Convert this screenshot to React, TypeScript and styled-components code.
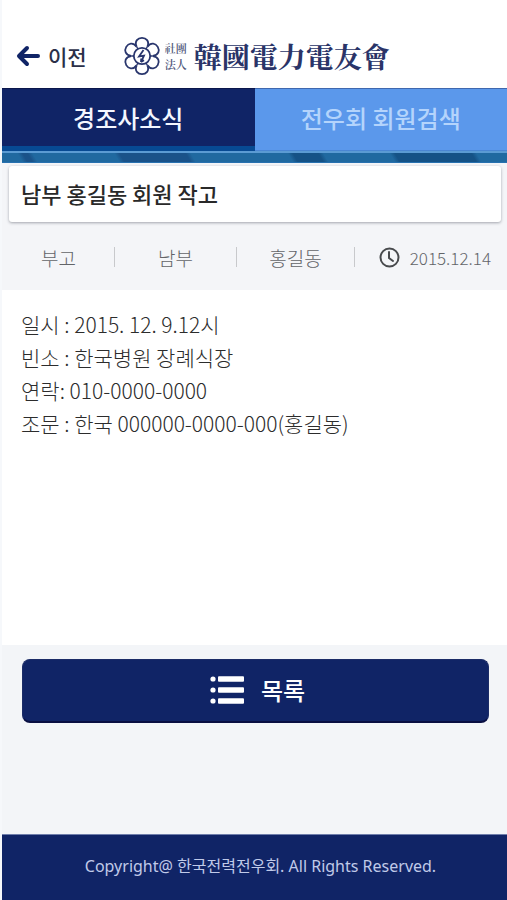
import React from 'react';
import styled, { createGlobalStyle } from 'styled-components';

const navy = '#102466';

const GlobalStyle = createGlobalStyle`
  * { box-sizing: border-box; }
  body {
    margin: 0;
    background: #fff;
    font-family: "Noto Sans CJK KR", "Noto Sans", sans-serif;
  }
`;

const Page = styled.div`
  min-height: 100vh;
  display: flex;
  flex-direction: column;
  border-left: 2px solid #f6f8fb;
`;

const Header = styled.header`
  height: 88px;
  padding: 24px 16px 0 14px;
  display: flex;
  align-items: center;
  gap: 36px;
`;

const BackButton = styled.button`
  display: flex;
  align-items: center;
  gap: 8px;
  padding: 0;
  border: 0;
  background: none;
  color: ${navy};
  font: 500 21px/32px "Noto Sans CJK KR", sans-serif;
  white-space: nowrap;
  cursor: pointer;
`;

const BackLabel = styled.span`
  color: #2b3048;
`;

const Brand = styled.a`
  display: flex;
  align-items: center;
  color: #2a3468;
  text-decoration: none;
  white-space: nowrap;
`;

const BrandPrefix = styled.span`
  display: grid;
  margin: 0 7px 0 4px;
  color: #4c5479;
  font: 600 11px/16px "Noto Serif CJK KR", "Noto Sans CJK KR", serif;
`;

const BrandName = styled.span`
  font: 700 28px/36px "Noto Serif CJK KR", "Noto Sans CJK KR", serif;
`;

const Tabs = styled.nav`
  display: grid;
  grid-template-columns: 1fr 1fr;
  height: 63px;
`;

const Tab = styled.a<{ $active?: boolean }>`
  display: flex;
  align-items: center;
  justify-content: center;
  padding-bottom: ${p => (p.$active ? '0' : '4px')};
  border-top: 1px solid ${p => (p.$active ? '#0b174c' : '#3f68ae')};
  border-bottom: ${p => (p.$active ? '5px solid #074a93' : '1px solid #4b86d3')};
  background: ${p => (p.$active ? navy : '#5b98eb')};
  color: ${p => (p.$active ? '#f4f7ff' : '#b4d4fc')};
  font-size: 24px;
  line-height: 32px;
  font-weight: 500;
  text-decoration: none;
  white-space: nowrap;
`;

const Ribbon = styled.div`
  height: 12px;
  border-top: 2px solid #5b9bd3;
  border-bottom: 1px solid #2871b0;
  background: linear-gradient(
    60deg,
    #2069a0 4%, #1a5289 5% 6%, #2069a0 7% 23%, #1a5289 24% 37%,
    #2069a0 38% 57%, #155286 58% 63%, #2069a0 64% 77%, #155286 78% 93%, #2069a0 94%
  );
`;

const Summary = styled.section`
  padding: 3px 6px 0 7px;
  background: #f4f5f8;
`;

const Title = styled.h1`
  margin: 0;
  padding: 11px 12px 13px;
  border-radius: 3px;
  background: #fff;
  box-shadow: 0 1px 3px rgba(40, 45, 60, 0.4);
  color: #292929;
  font-size: 22px;
  line-height: 32px;
  font-weight: 500;
`;

const Meta = styled.ul`
  display: grid;
  grid-template-columns: 106fr 122fr 118fr 146fr;
  align-items: center;
  height: 68px;
  margin: 0;
  padding: 2px 0 0;
  list-style: none;
`;

const MetaItem = styled.li`
  display: flex;
  align-items: center;
  justify-content: center;
  gap: 10px;
  height: 20px;
  border-right: 1px solid #c8c9cc;
  color: #626468;
  font-size: 19px;
  font-weight: 300;
  white-space: nowrap;

  &:first-child {
    padding-right: 6px;
  }

  &:last-child {
    border-right: 0;
    justify-content: flex-end;
    padding-right: 10px;
  }
`;

const DateText = styled.time`
  font-size: 17px;
`;

const Article = styled.article`
  flex: 1 0 auto;
  min-height: 320px;
  padding: 18px 19px;
  color: #2c2c2c;
  font-size: 21px;
  line-height: 33px;
  font-weight: 300;
`;

const Line = styled.p`
  margin: 0;
`;

const Actions = styled.section`
  height: 189px;
  padding: 14px 18px 0 20px;
  background: #f3f5f8;
`;

const ListButton = styled.button`
  display: flex;
  align-items: center;
  justify-content: center;
  gap: 16px;
  width: 100%;
  height: 64px;
  padding: 0 0 2px 4px;
  border: 1px solid #1b2c67;
  border-bottom: 2px solid #090f42;
  border-radius: 8px;
  background: ${navy};
  color: #fff;
  font: 500 24px/32px "Noto Sans CJK KR", sans-serif;
  cursor: pointer;
`;

const Footer = styled.footer`
  height: 66px;
  border-top: 1px solid #6f7eab;
  background: ${navy};
  color: #c0cae9;
  font: 400 16px/63px "Noto Sans", "Noto Sans CJK KR", sans-serif;
  text-align: center;
  padding-left: 12px;
  white-space: nowrap;
`;

const BackArrow = () => (
  <svg width="24" height="22" viewBox="0 0 24 22" fill="none" stroke="currentColor" strokeWidth="4" strokeLinecap="round" strokeLinejoin="round" aria-hidden="true">
    <path d="M11 3 3 11l8 8M4 11h18" />
  </svg>
);

const petals = [0, 60, 120, 180, 240, 300];

const Emblem = () => (
  <svg width="38" height="40" viewBox="-19 -20 38 40" fill="none" stroke="#29366d" aria-hidden="true">
    {petals.map(angle => (
      <path key={angle} transform={`rotate(${angle})`} d="M-5.4-9.4C-7.8-15-4-18.2 0-18.2S7.8-15 5.4-9.4" strokeWidth="1.8" />
    ))}
    <circle r="8.2" strokeWidth="1.8" />
    <path d="M-5.4-9.4-4-7M5.4-9.4 4-7M10.8 0H8M5.4 9.4 4 7M-5.4 9.4-4 7M-10.8 0H-8" strokeWidth="1.3" />
    <path d="M1.5-6-3 .5l5-.8L-1 6M-1 6l.2-3.5M-1 6l3-1.8" strokeWidth="1.8" />
  </svg>
);

const Clock = () => (
  <svg width="21" height="21" viewBox="0 0 21 21" fill="none" stroke="#484a4d" strokeWidth="2" strokeLinecap="round" aria-hidden="true">
    <circle cx="10.5" cy="10.5" r="9" />
    <path d="M10 5v6l4 3" />
  </svg>
);

const ListIcon = () => (
  <svg width="35" height="28" viewBox="0 0 35 28" fill="currentColor" aria-hidden="true">
    {[3, 14, 25].map(y => (
      <g key={y}>
        <circle cx="3" cy={y} r="2.6" />
        <rect x="8" y={y - 2.8} width="26" height="5.6" rx="1" />
      </g>
    ))}
  </svg>
);

export default function App() {
  return (
    <>
      <GlobalStyle />
      <Page>
        <Header>
          <BackButton type="button"><BackArrow /><BackLabel>이전</BackLabel></BackButton>
          <Brand href="#home">
            <Emblem />
            <BrandPrefix><span>社團</span><span>法人</span></BrandPrefix>
            <BrandName>韓國電力電友會</BrandName>
          </Brand>
        </Header>
        <Tabs>
          <Tab href="#news" $active aria-current="page">경조사소식</Tab>
          <Tab href="#members">전우회 회원검색</Tab>
        </Tabs>
        <Ribbon />
        <Summary>
          <Title>남부 홍길동 회원 작고</Title>
          <Meta>
            <MetaItem>부고</MetaItem>
            <MetaItem>남부</MetaItem>
            <MetaItem>홍길동</MetaItem>
            <MetaItem><Clock /><DateText dateTime="2015-12-14">2015.12.14</DateText></MetaItem>
          </Meta>
        </Summary>
        <Article>
          <Line>일시 : 2015. 12. 9.12시</Line>
          <Line>빈소 : 한국병원 장례식장</Line>
          <Line>연락: 010-0000-0000</Line>
          <Line>조문 : 한국 000000-0000-000(홍길동)</Line>
        </Article>
        <Actions>
          <ListButton type="button"><ListIcon />목록</ListButton>
        </Actions>
        <Footer>Copyright@ 한국전력전우회. All Rights Reserved.</Footer>
      </Page>
    </>
  );
}
